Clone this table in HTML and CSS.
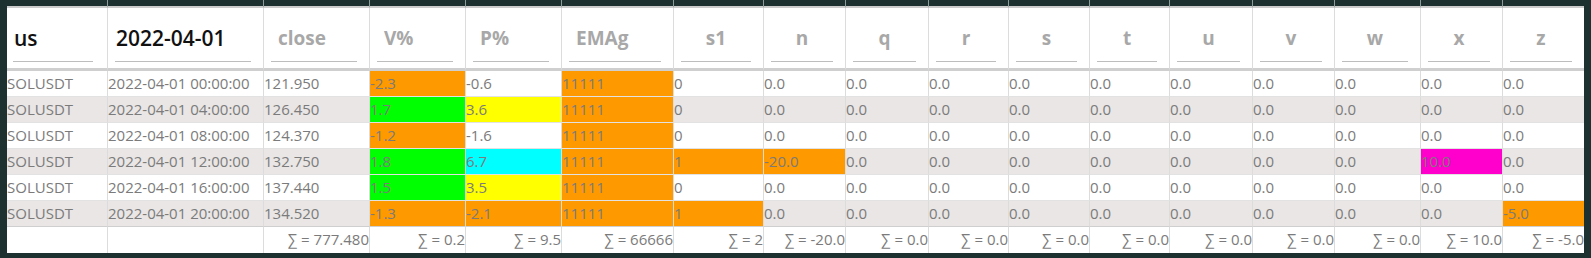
FILE: index.html
```html
<!DOCTYPE html>
<html>
<head>
<meta charset="utf-8">
<link rel="stylesheet" href="styles.css">
</head>
<body>
<div class="frame">
  <div class="tbl">
    <div class="row strip">
      <div></div><div></div><div></div><div></div><div></div><div></div><div></div><div></div><div></div><div></div><div></div><div></div><div></div><div></div><div></div><div></div><div></div>
    </div>
    <div class="row head">
      <div class="hc"><div class="inp val">us</div></div>
      <div class="hc"><div class="inp val">2022-04-01</div></div>
      <div class="hc"><div class="inp lbl">close</div></div>
      <div class="hc"><div class="inp lbl">V%</div></div>
      <div class="hc"><div class="inp lbl">P%</div></div>
      <div class="hc"><div class="inp lbl">EMAg</div></div>
      <div class="hc"><div class="inp lbl ctr">s1</div></div>
      <div class="hc"><div class="inp lbl ctr">n</div></div>
      <div class="hc"><div class="inp lbl ctr">q</div></div>
      <div class="hc"><div class="inp lbl ctr">r</div></div>
      <div class="hc"><div class="inp lbl ctr">s</div></div>
      <div class="hc"><div class="inp lbl ctr">t</div></div>
      <div class="hc"><div class="inp lbl ctr">u</div></div>
      <div class="hc"><div class="inp lbl ctr">v</div></div>
      <div class="hc"><div class="inp lbl ctr">w</div></div>
      <div class="hc"><div class="inp lbl ctr">x</div></div>
      <div class="hc"><div class="inp lbl ctr">z</div></div>
    </div>

    <div class="row data">
      <div>SOLUSDT</div><div>2022-04-01 00:00:00</div><div>121.950</div>
      <div class="or">-2.3</div><div>-0.6</div><div class="or">11111</div><div>0</div>
      <div>0.0</div><div>0.0</div><div>0.0</div><div>0.0</div><div>0.0</div><div>0.0</div><div>0.0</div><div>0.0</div><div>0.0</div><div>0.0</div>
    </div>
    <div class="row data alt">
      <div>SOLUSDT</div><div>2022-04-01 04:00:00</div><div>126.450</div>
      <div class="gr">1.7</div><div class="ye">3.6</div><div class="or">11111</div><div>0</div>
      <div>0.0</div><div>0.0</div><div>0.0</div><div>0.0</div><div>0.0</div><div>0.0</div><div>0.0</div><div>0.0</div><div>0.0</div><div>0.0</div>
    </div>
    <div class="row data">
      <div>SOLUSDT</div><div>2022-04-01 08:00:00</div><div>124.370</div>
      <div class="or">-1.2</div><div>-1.6</div><div class="or">11111</div><div>0</div>
      <div>0.0</div><div>0.0</div><div>0.0</div><div>0.0</div><div>0.0</div><div>0.0</div><div>0.0</div><div>0.0</div><div>0.0</div><div>0.0</div>
    </div>
    <div class="row data alt">
      <div>SOLUSDT</div><div>2022-04-01 12:00:00</div><div>132.750</div>
      <div class="gr">1.8</div><div class="cy">6.7</div><div class="or">11111</div><div class="or">1</div>
      <div class="or">-20.0</div><div>0.0</div><div>0.0</div><div>0.0</div><div>0.0</div><div>0.0</div><div>0.0</div><div>0.0</div><div class="mg">10.0</div><div>0.0</div>
    </div>
    <div class="row data">
      <div>SOLUSDT</div><div>2022-04-01 16:00:00</div><div>137.440</div>
      <div class="gr">1.5</div><div class="ye">3.5</div><div class="or">11111</div><div>0</div>
      <div>0.0</div><div>0.0</div><div>0.0</div><div>0.0</div><div>0.0</div><div>0.0</div><div>0.0</div><div>0.0</div><div>0.0</div><div>0.0</div>
    </div>
    <div class="row data alt last">
      <div>SOLUSDT</div><div>2022-04-01 20:00:00</div><div>134.520</div>
      <div class="or">-1.3</div><div class="or">-2.1</div><div class="or">11111</div><div class="or">1</div>
      <div>0.0</div><div>0.0</div><div>0.0</div><div>0.0</div><div>0.0</div><div>0.0</div><div>0.0</div><div>0.0</div><div>0.0</div><div class="or">-5.0</div>
    </div>

    <div class="row foot">
      <div></div><div></div><div>∑ = 777.480</div>
      <div>∑ = 0.2</div><div>∑ = 9.5</div><div>∑ = 66666</div><div>∑ = 2</div>
      <div>∑ = -20.0</div><div>∑ = 0.0</div><div>∑ = 0.0</div><div>∑ = 0.0</div><div>∑ = 0.0</div><div>∑ = 0.0</div><div>∑ = 0.0</div><div>∑ = 0.0</div><div>∑ = 10.0</div><div>∑ = -5.0</div>
    </div>
  </div>
</div>
</body>
</html>
```

FILE: styles.css
```css
html, body {
  margin: 0;
  padding: 0;
  background: #1e3131;
}

body {
  width: 1591px;
  height: 258px;
  overflow: hidden;
  font-family: "Open Sans", "DejaVu Sans", sans-serif;
}

.frame {
  padding: 0 7px 5px 7px;
}

.tbl {
  display: grid;
  grid-template-columns: 100px 156px 106px 96px 96px 112px 90px 82px 83px 80px 81px 80px 83px 82px 86px 82px 82px;
  width: 1577px;
  background: #ffffff;
}

.row {
  display: contents;
}

.row > div {
  box-sizing: border-box;
  min-width: 0;
  overflow: hidden;
  white-space: nowrap;
}

.row > div + div {
  border-left: 1px solid #dcdcdc;
}

/* top dark strip */
.strip > div {
  height: 8px;
  background: #1e3131;
  border-bottom: 2px solid #cccccc;
}
.strip > div + div {
  border-left: 1px solid #8d9a9a;
}

/* header */
.head > div {
  height: 63px;
  background: #ffffff;
  border-bottom: 3px solid #cfcfcf;
  padding: 0 12px 0 7px;
  display: flex;
  align-items: flex-end;
}
.head > div:first-child {
  padding-left: 6px;
  padding-right: 14px;
}

.inp {
  flex: 1;
  height: 40px;
  box-sizing: border-box;
  border-bottom: 1px solid #bdbdbd;
  margin-bottom: 6px;
  line-height: 26px;
  padding-top: 3px;
}

.val {
  font-size: 21px;
  font-weight: 600;
  color: #111111;
  padding-left: 1px;
}

.lbl {
  font-size: 19px;
  font-weight: 700;
  color: #a8a8a8;
  padding-left: 7px;
}

.lbl.ctr {
  text-align: center;
  padding-left: 0;
}

/* data */
.data > div {
  height: 26px;
  line-height: 24px;
  font-size: 15px;
  color: #7b7b7b;
  background: #ffffff;
  border-bottom: 1px solid #e2e2e2;
}

.data.alt > div {
  background: #e9e6e5;
}

.data.last > div {
  border-bottom-color: #cfcfcf;
}

.data > div.or { background: #ff9900; }
.data > div.gr { background: #00ff00; }
.data > div.ye { background: #ffff00; }
.data > div.cy { background: #00ffff; }
.data > div.mg { background: #ff00cc; }

/* footer */
.foot > div {
  height: 26px;
  line-height: 25px;
  font-size: 15px;
  color: #7b7b7b;
  background: #ffffff;
  text-align: right;
}
```
